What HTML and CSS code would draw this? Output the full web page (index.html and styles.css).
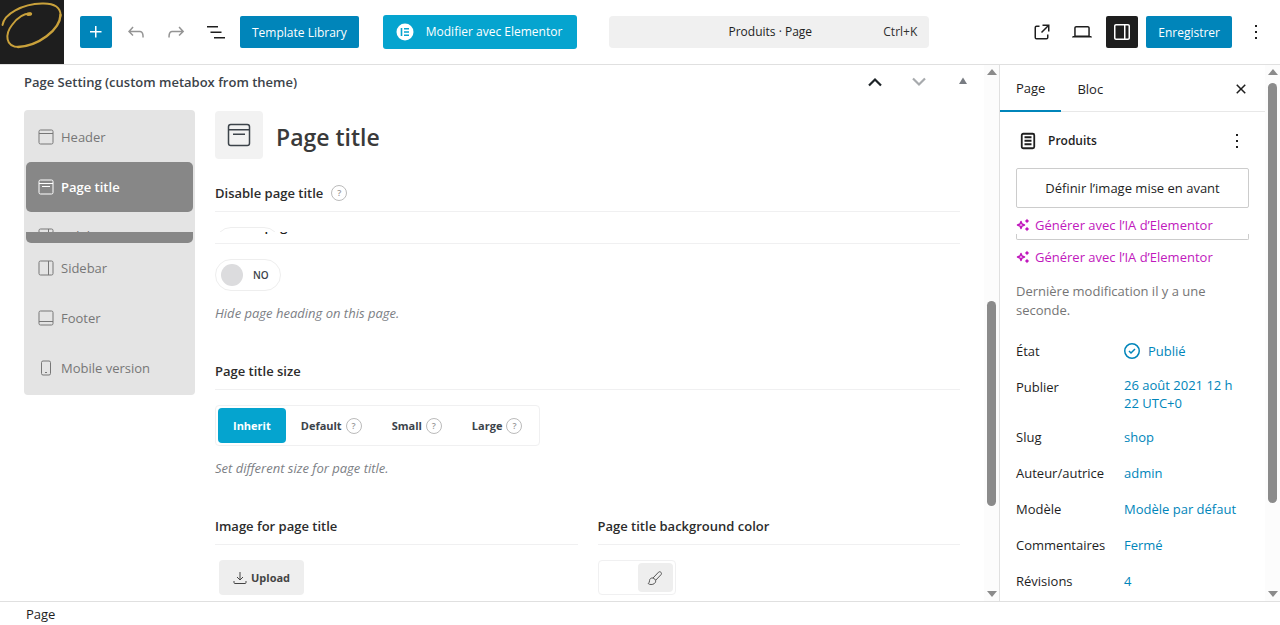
FILE: index.html
```html
<!DOCTYPE html>
<html lang="fr">
<head>
    <meta charset="UTF-8">
    <meta name="viewport" content="width=device-width, initial-scale=1.0">
    <title>Produits</title>
    <link rel="stylesheet" href="styles.css">
</head>
<body>

    <!-- shared icons -->
    <svg class="sprite" aria-hidden="true">
        <symbol id="i-header" viewBox="0 0 16 16"><rect x="1" y="1" width="14" height="14" rx="1.5"/><path d="M1 4.5h14"/></symbol>
        <symbol id="i-title" viewBox="0 0 16 16"><rect x="1" y="1" width="14" height="14" rx="1.5"/><path d="M1 4.5h14M4 7.5h8"/></symbol>
        <symbol id="i-sidebar" viewBox="0 0 16 16"><rect x="1" y="1" width="14" height="14" rx="1.5"/><path d="M10.5 1v14"/></symbol>
        <symbol id="i-footer" viewBox="0 0 16 16"><rect x="1" y="1" width="14" height="14" rx="1.5"/><path d="M1 11.5h14"/></symbol>
        <symbol id="i-mobile" viewBox="0 0 16 16"><rect x="3.5" y="1" width="9" height="14" rx="1.5"/><path d="M7 12.5h2"/></symbol>
        <symbol id="i-more" viewBox="0 0 24 24"><path d="M13 19h-2v-2h2v2zm0-6h-2v-2h2v2zm0-6h-2V5h2v2z"/></symbol>
        <symbol id="i-ai" viewBox="0 0 14 14"><path d="M5 3.500 6 6 8.500 7 6 8 5 10.500 4 8 1.500 7 4 6Z" fill="none" stroke="currentColor" stroke-width="1.500" stroke-linejoin="round"/><path d="M11 .8 11.900 2.100 13.200 3 11.900 3.900 11 5.200 10.100 3.900 8.800 3 10.100 2.100ZM11 8.800 11.900 10.100 13.200 11 11.900 11.900 11 13.200 10.100 11.900 8.800 11 10.100 10.100Z"/></symbol>
    </svg>

    <header class="toolbar">
        <a href="#" class="logo" aria-label="Site">
            <svg viewBox="0 0 64 64" width="64" height="64"><g fill="none" stroke="#c9a13b" stroke-linecap="round"><path d="M2.500 25C4 14 22 4 42 3.500C55 3 61 8 60.500 16" stroke-width="1.900"/><path d="M60.500 15C60 30 38 46 18 47" stroke-width="2.400"/><path d="M19 47C5 47 5 34 12 25C17 18 24 13.500 30 13.500" stroke-width="2"/><path d="M28 14.200L30.500 14" stroke-width="3.400"/></g></svg>
        </a>
        <div class="tools">
            <button class="icon-btn blue" aria-label="Ajouter"><svg viewBox="0 0 24 24"><path d="M11 12.500V17.500H12.500V12.500H17.500V11H12.500V6H11V11H6V12.500H11Z"/></svg></button>
            <button class="icon-btn muted" aria-label="Annuler"><svg viewBox="0 0 24 24"><path d="M18.300 11.700c-.6-.6-1.400-.9-2.300-.9H6.700l2.900-3.300-1.100-1-4.500 5L8.500 16l1-1-2.700-2.700H16c.5 0 .9.2 1.300.5 1 1 1 3.400 1 4.500v.3h1.500v-.2c0-1.500 0-4.300-1.500-5.700z"/></svg></button>
            <button class="icon-btn muted" aria-label="Rétablir"><svg viewBox="0 0 24 24"><path d="M15.600 6.500l-1.100 1 2.900 3.300H8c-.9 0-1.700.3-2.300.9-1.400 1.500-1.400 4.200-1.400 5.600v.2h1.500v-.3c0-1.100 0-3.500 1-4.500.3-.3.7-.5 1.300-.5h9.200L14.500 15l1.100 1.100 4.600-4.600-4.600-5z"/></svg></button>
            <button class="icon-btn" aria-label="Vue en liste"><svg viewBox="0 0 24 24"><path d="M3 6h11v1.500H3V6Zm3.500 5.500h11V13h-11v-1.500ZM21 17H10v1.500h11V17Z"/></svg></button>
            <button class="btn">Template Library</button>
        </div>
        <button class="btn elementor">
            <svg viewBox="0 0 18 18"><circle cx="9" cy="9" r="8.500" fill="#fff"/><path d="M5.500 5v8M8 5.800h5M8 9h5M8 12.200h5" stroke="#05a4cf" stroke-width="1.600"/></svg>
            Modifier avec Elementor
        </button>
        <button class="doc-bar"><span>Produits · Page</span><kbd>Ctrl+K</kbd></button>
        <div class="tools end">
            <button class="icon-btn" aria-label="Voir la page"><svg viewBox="0 0 24 24"><path d="M19.500 4.500h-7V6h4.440l-5.970 5.970 1.060 1.060L18 7.060v4.440h1.500v-7Zm-13 1a2 2 0 0 0-2 2v10a2 2 0 0 0 2 2h10a2 2 0 0 0 2-2v-3H17v3a.5.5 0 0 1-.5.5h-10a.5.5 0 0 1-.5-.5v-10a.5.5 0 0 1 .5-.5h3V5.500h-3Z"/></svg></button>
            <button class="icon-btn" aria-label="Prévisualiser"><svg viewBox="0 0 24 24"><path d="M20.500 16h-.7V8c0-1.100-.9-2-2-2H6.200c-1.100 0-2 .9-2 2v8h-.7c-.8 0-1.500.7-1.500 1.500h20c0-.8-.7-1.500-1.500-1.500zM5.700 8c0-.3.2-.5.5-.5h11.600c.3 0 .5.2.5.5v7.600H5.700V8z"/></svg></button>
            <button class="icon-btn dark" aria-label="Réglages"><svg viewBox="0 0 24 24"><path d="M18 4H6c-1.100 0-2 .9-2 2v12c0 1.100.9 2 2 2h12c1.100 0 2-.9 2-2V6c0-1.100-.9-2-2-2zm-4 14.500H6c-.3 0-.5-.2-.5-.5V6c0-.3.2-.5.5-.5h8v13zm4.500-.5c0 .3-.2.5-.5.5h-2.500v-13H18c.3 0 .5.2.5.5v12z"/></svg></button>
            <button class="btn save">Enregistrer</button>
            <button class="icon-btn" aria-label="Options"><svg><use href="#i-more"/></svg></button>
        </div>
    </header>

    <div class="workspace">
        <main class="editor">
            <div class="metabox">
                <div class="metabox-head">
                    <h2>Page Setting (custom metabox from theme)</h2>
                    <button aria-label="Monter"><svg viewBox="0 0 16 16"><path d="M2 11.500 8 5.500l6 6" fill="none" stroke="#1d2327" stroke-width="2.200"/></svg></button>
                    <button aria-label="Descendre"><svg viewBox="0 0 16 16"><path d="M2 4.500l6 6 6-6" fill="none" stroke="#a7aaad" stroke-width="2.200"/></svg></button>
                    <button aria-label="Replier"><svg viewBox="0 0 16 16"><path d="M8 3.500l4 6.500H4z" fill="#787c82"/></svg></button>
                </div>

                <div class="settings">
                    <nav class="side-nav">
                        <a href="#"><svg><use href="#i-header"/></svg>Header</a>
                        <a href="#" class="active"><svg><use href="#i-title"/></svg>Page title</a>
                        <div class="nav-slice" aria-hidden="true"><a><svg><use href="#i-sidebar"/></svg>Sidebar</a></div>
                        <div class="nav-edge"></div>
                        <a href="#"><svg><use href="#i-sidebar"/></svg>Sidebar</a>
                        <a href="#"><svg><use href="#i-footer"/></svg>Footer</a>
                        <a href="#"><svg><use href="#i-mobile"/></svg>Mobile version</a>
                    </nav>

                    <section class="panel">
                        <div class="panel-head">
                            <span class="panel-icon"><svg><use href="#i-title"/></svg></span>
                            <h1>Page title</h1>
                        </div>

                        <h3>Disable page title <span class="help">?</span></h3>
                        <div class="field-slice" aria-hidden="true">
                            <div class="toggle-cap"><span></span></div>
                            <div class="text-cap"><span>Disable page title</span></div>
                        </div>
                        <div class="field">
                            <label class="toggle"><input type="checkbox"><span>NO</span></label>
                            <p class="hint">Hide page heading on this page.</p>
                        </div>

                        <h3>Page title size</h3>
                        <div class="field">
                            <div class="choices">
                                <label><input type="radio" name="size" checked><span>Inherit</span></label>
                                <label><input type="radio" name="size"><span>Default <i class="help">?</i></span></label>
                                <label><input type="radio" name="size"><span>Small <i class="help">?</i></span></label>
                                <label><input type="radio" name="size"><span>Large <i class="help">?</i></span></label>
                            </div>
                            <p class="hint">Set different size for page title.</p>
                        </div>

                        <div class="columns">
                            <div>
                                <h3>Image for page title</h3>
                                <div class="field">
                                    <button class="upload"><svg viewBox="0 0 14 14"><path d="M7 1v8M4 6l3 3 3-3M1 10v1.500a1 1 0 0 0 1 1h10a1 1 0 0 0 1-1V10"/></svg>Upload</button>
                                </div>
                            </div>
                            <div>
                                <h3>Page title background color</h3>
                                <div class="field">
                                    <div class="color">
                                        <button aria-label="Choisir une couleur"><svg viewBox="0 0 16 16"><path d="M6 8 11.500 2.200c1.500-1.500 4 .8 2.500 2.500L8.600 10.300M6 8c1.200.3 2.200 1.200 2.600 2.300M6 8c-2-.3-3.300.8-3.400 2.300 0 1.500-.5 2.600-1.400 3.200 1.200 1.300 4.400 1.400 6.100.1 1.200-1 1.600-2.100 1.300-3.300"/></svg></button>
                                    </div>
                                </div>
                            </div>
                        </div>
                    </section>
                </div>
            </div>
            <div class="scrollbar main-scroll" aria-hidden="true"><i class="up"></i><div class="track"><b></b></div><i class="down"></i></div>
        </main>

        <aside class="sidebar">
            <div class="sidebar-body">
                <div class="tabs">
                    <button class="current">Page</button>
                    <button>Bloc</button>
                    <button class="close" aria-label="Fermer"><svg viewBox="0 0 24 24"><path d="M12 13.060l3.712 3.713 1.061-1.060L13.061 12l3.712-3.712-1.060-1.060L12 10.938 8.288 7.227l-1.061 1.060L10.939 12l-3.712 3.712 1.060 1.061L12 13.061z"/></svg></button>
                </div>
                <div class="summary">
                    <div class="summary-head">
                        <svg class="page-icon" viewBox="0 0 24 24"><path d="M8.500 8.250h7M8.500 11.750h7M8.500 15.250h7"/><rect x="5.750" y="4.750" width="12.500" height="14.500" rx="1.500"/></svg>
                        <h2>Produits</h2>
                        <button aria-label="Actions"><svg><use href="#i-more"/></svg></button>
                    </div>
                    <button class="featured">Définir l’image mise en avant</button>
                    <a href="#" class="ai"><svg><use href="#i-ai"/></svg>Générer avec l’IA d’Elementor</a>
                    <div class="featured-edge"></div>
                    <a href="#" class="ai"><svg><use href="#i-ai"/></svg>Générer avec l’IA d’Elementor</a>
                    <p class="modified">Dernière modification il y a une seconde.</p>
                    <div class="row"><span>État</span><button><svg viewBox="0 0 24 24"><circle cx="12" cy="12" r="7.250"/><path d="M9 12l2 2 4-4"/></svg>Publié</button></div>
                    <div class="row"><span>Publier</span><button>26 août 2021 12 h 22 UTC+0</button></div>
                    <div class="row"><span>Slug</span><button>shop</button></div>
                    <div class="row"><span>Auteur/autrice</span><button>admin</button></div>
                    <div class="row"><span>Modèle</span><button>Modèle par défaut</button></div>
                    <div class="row"><span>Commentaires</span><button>Fermé</button></div>
                    <div class="row"><span>Révisions</span><button>4</button></div>
                </div>
            </div>
            <div class="scrollbar side-scroll" aria-hidden="true"><i class="up"></i><div class="track"><b></b></div><i class="down"></i></div>
        </aside>
    </div>

    <footer class="breadcrumb">Page</footer>

</body>
</html>
```

FILE: styles.css
```css
* {
    box-sizing: border-box;
}
body {
    display: flex;
    flex-direction: column;
    height: 100vh;
    margin: 0;
    overflow: hidden;
    background: #fff;
    color: #1e1e1e;
    font-family: "Open Sans", "Noto Sans", sans-serif;
    font-size: 13px;
    line-height: 18px;
}
button {
    padding: 0;
    border: 0;
    background: none;
    color: inherit;
    font: inherit;
    cursor: pointer;
}
a {
    text-decoration: none;
}
svg {
    display: block;
    flex: none;
    width: 24px;
    height: 24px;
    fill: currentColor;
}
h1, h2, h3, p {
    margin: 0;
}
.sprite {
    position: absolute;
    width: 0;
    height: 0;
}

/* top bar */
.toolbar {
    display: flex;
    flex: none;
    align-items: center;
    height: 65px;
    padding-right: 8px;
    border-bottom: 1px solid #e0e0e0;
}
.logo {
    background: #1e1e1e;
}
.logo svg {
    width: 64px;
    height: 64px;
}
.tools {
    display: flex;
    gap: 8px;
    margin-left: 16px;
}
.tools.end {
    margin-left: auto;
}
.icon-btn {
    display: flex;
    align-items: center;
    justify-content: center;
    width: 32px;
    height: 32px;
    border-radius: 2px;
}
.icon-btn.blue {
    background: #0085ba;
    color: #fff;
}
.icon-btn.dark {
    background: #1e1e1e;
    color: #fff;
}
.icon-btn.muted {
    color: #949494;
}
.btn {
    height: 32px;
    padding: 2px 12px 0;
    border-radius: 2px;
    background: #0085ba;
    color: #fff;
    font-size: 12px;
    font-weight: 500;
    white-space: nowrap;
}
.btn.elementor {
    display: flex;
    align-items: center;
    gap: 12px;
    height: 34px;
    margin: 0 32px 0 24px;
    padding: 0 15px 0 13px;
    border-radius: 3px;
    background: #05a4cf;
}
.elementor svg {
    width: 18px;
    height: 18px;
}
.doc-bar {
    display: flex;
    flex: 0 1 320px;
    align-items: center;
    height: 32px;
    padding: 0 12px;
    border-radius: 4px;
    background: #f0f0f0;
    font-size: 12px;
}
.doc-bar span {
    flex: 1;
    padding-left: 36px;
}
.doc-bar kbd {
    color: #2f2f2f;
    font: inherit;
}

/* editor area */
.workspace {
    display: flex;
    flex: 1;
    min-height: 0;
}
.editor {
    display: flex;
    flex: 1;
    min-width: 0;
    overflow: hidden;
}
.metabox {
    flex: 1;
    min-width: 0;
    padding: 0 24px;
}
.metabox-head {
    display: flex;
    align-items: center;
    height: 34px;
    margin-bottom: 11px;
}
.metabox-head h2 {
    flex: 1;
    color: #3c434a;
    font-size: 13px;
    font-weight: 600;
}
.metabox-head button {
    margin-left: 28px;
}
.metabox-head button:last-child {
    margin-right: -11px;
}
.metabox-head svg {
    width: 16px;
    height: 16px;
}
.settings {
    display: flex;
    align-items: flex-start;
    gap: 20px;
}
.side-nav {
    flex: none;
    width: 171px;
    padding: 2px;
    border-radius: 4px;
    background: #e4e4e4;
}
.side-nav a {
    display: flex;
    align-items: center;
    gap: 7px;
    height: 50px;
    padding-left: 12px;
    border-radius: 5px;
    color: #777;
}
.side-nav a.active {
    background: #878787;
    color: #fff;
    font-weight: 600;
}
.side-nav svg {
    width: 16px;
    height: 16px;
    fill: none;
    stroke: currentColor;
}
.nav-slice {
    height: 20px;
    overflow: hidden;
}
.side-nav .nav-slice a {
    height: 48px;
}
.nav-edge {
    height: 11px;
    border-radius: 0 0 5px 5px;
    background: #878787;
}
.panel {
    flex: 1;
    min-width: 0;
}
.panel-head {
    display: flex;
    align-items: center;
    gap: 13px;
    margin: 1px 0 16px;
}
.panel-icon {
    display: flex;
    align-items: center;
    justify-content: center;
    width: 48px;
    height: 48px;
    border-radius: 4px;
    background: #f2f2f2;
    color: #3c434a;
}
.panel-icon svg {
    fill: none;
    stroke: currentColor;
}
.panel h1 {
    padding-top: 4px;
    color: #3a3a3a;
    font-size: 23px;
    font-weight: 600;
    line-height: 44px;
}
.panel h3 {
    display: flex;
    align-items: center;
    gap: 8px;
    height: 37px;
    border-bottom: 1px solid #f0f0f1;
    color: #2c2c2c;
    font-size: 13px;
    font-weight: 600;
}
.help {
    display: inline-flex;
    align-items: center;
    justify-content: center;
    width: 16px;
    height: 16px;
    border: 1px solid #bbb;
    border-radius: 50%;
    color: #999;
    font-size: 9px;
    font-style: normal;
    font-weight: 600;
}
.field {
    padding-top: 15px;
}
.field-slice {
    height: 32px;
    padding-top: 15px;
    border-bottom: 1px solid #f0f0f1;
}
.toggle-cap {
    height: 5px;
    overflow: hidden;
}
.toggle-cap span {
    display: block;
    width: 65px;
    height: 32px;
    border: 1px solid #eee;
    border-radius: 16px;
}
.text-cap {
    display: flex;
    align-items: flex-end;
    height: 2px;
    overflow: hidden;
    font-weight: 600;
    line-height: 16px;
}
.toggle {
    display: flex;
    align-items: center;
    gap: 10px;
    width: 66px;
    height: 32px;
    padding-left: 5px;
    border: 1px solid #eee;
    border-radius: 16px;
    color: #3c434a;
    font-size: 10px;
    font-weight: 600;
}
.toggle input {
    width: 22px;
    height: 22px;
    margin: 0;
    border-radius: 50%;
    background: #dcdcde;
    appearance: none;
}
.hint {
    height: 62px;
    padding-top: 13px;
    color: #7c8085;
    font-style: italic;
}
.choices {
    display: flex;
    width: max-content;
    padding: 2px;
    border: 1px solid #f0f0f1;
    border-radius: 4px;
}
.choices input {
    position: absolute;
    opacity: 0;
}
.choices span {
    display: flex;
    align-items: center;
    gap: 4px;
    height: 35px;
    padding: 0 15px;
    border-radius: 4px;
    color: #3c434a;
    font-size: 11px;
    font-weight: 700;
}
.choices .help {
    font-size: 9px;
}
.choices input:checked + span {
    background: #05a4cf;
    color: #fff;
}
.columns {
    display: grid;
    grid-template-columns: 1fr 1fr;
    gap: 20px;
}
.upload {
    display: flex;
    align-items: center;
    gap: 4px;
    height: 35px;
    margin-left: 4px;
    padding: 0 14px;
    border-radius: 4px;
    background: #eee;
    color: #444;
    font-size: 11px;
    font-weight: 700;
}
.upload svg {
    width: 14px;
    height: 14px;
    fill: none;
    stroke: currentColor;
}
.color {
    display: flex;
    justify-content: flex-end;
    width: 78px;
    height: 35px;
    padding: 2px;
    border: 1px solid #f0f0f1;
    border-radius: 4px;
}
.color button {
    display: flex;
    align-items: center;
    justify-content: center;
    width: 35px;
    border-radius: 4px;
    background: #eee;
}
.color svg {
    width: 16px;
    height: 16px;
    fill: none;
    stroke: #555;
}

/* scrollbars */
.scrollbar {
    display: flex;
    flex: none;
    flex-direction: column;
    align-items: center;
    width: 15px;
    padding: 4px 0;
    background: #fcfcfc;
}
.scrollbar .up {
    border: 5px solid transparent;
    border-top: 0;
    border-bottom: 6px solid #8b8b8b;
}
.scrollbar .down {
    border: 5px solid transparent;
    border-bottom: 0;
    border-top: 6px solid #8b8b8b;
}
.track {
    display: flex;
    flex: 1;
    flex-direction: column;
    width: 9px;
    margin: 8px 0;
}
.track b {
    border-radius: 5px;
    background: #8b8b8b;
}
.main-scroll .track::before {
    content: "";
    flex: 0 0 43.6%;
}
.main-scroll .track b {
    flex: 0 0 41%;
}
.side-scroll .track b {
    flex: 0 0 84%;
}

/* settings sidebar */
.sidebar {
    display: flex;
    flex: none;
    width: 281px;
    overflow: hidden;
    border-left: 1px solid #e0e0e0;
}
.sidebar-body {
    flex: 1;
}
.tabs {
    display: flex;
    height: 47px;
    border-bottom: 1px solid #e8e8e8;
}
.tabs button {
    height: 47px;
    padding: 0 16px;
}
.tabs .current {
    border-bottom: 2px solid #0085ba;
}
.tabs .close {
    margin-left: auto;
    padding: 0 12px;
}
.summary {
    padding: 13px 16px 0;
}
.summary-head {
    display: flex;
    align-items: center;
    gap: 8px;
    height: 32px;
    margin-bottom: 11px;
}
.summary-head h2 {
    flex: 1;
    font-size: 12px;
    font-weight: 600;
}
.page-icon {
    fill: none;
    stroke: #1e1e1e;
    stroke-width: 1.8;
}
.featured {
    width: 100%;
    height: 40px;
    border: 1px solid #ccc;
    border-radius: 2px;
}
.ai {
    display: flex;
    align-items: center;
    gap: 5px;
    height: 18px;
    margin-top: 8px;
    color: #c118bd;
}
.ai svg {
    width: 14px;
    height: 14px;
}
.featured-edge {
    height: 6px;
    border: 1px solid #ccc;
    border-top: 0;
    border-radius: 0 0 2px 2px;
}
.modified {
    margin: 16px 0 15px;
    color: #757575;
    line-height: 19px;
}
.row {
    display: grid;
    grid-template-columns: 100px 1fr;
    align-items: start;
    gap: 8px;
    margin-bottom: 4px;
}
.row span {
    padding: 7px 0;
}
.row button {
    display: flex;
    align-items: center;
    min-height: 32px;
    padding: 5px 0;
    color: #0085ba;
    text-align: left;
}
.row svg {
    width: 24px;
    height: 24px;
    margin: -2px 4px -2px -4px;
    fill: none;
    stroke: currentColor;
    stroke-width: 1.5;
}

.breadcrumb {
    flex: none;
    height: 24px;
    padding: 3px 26px;
    border-top: 1px solid #e0e0e0;
}
```
